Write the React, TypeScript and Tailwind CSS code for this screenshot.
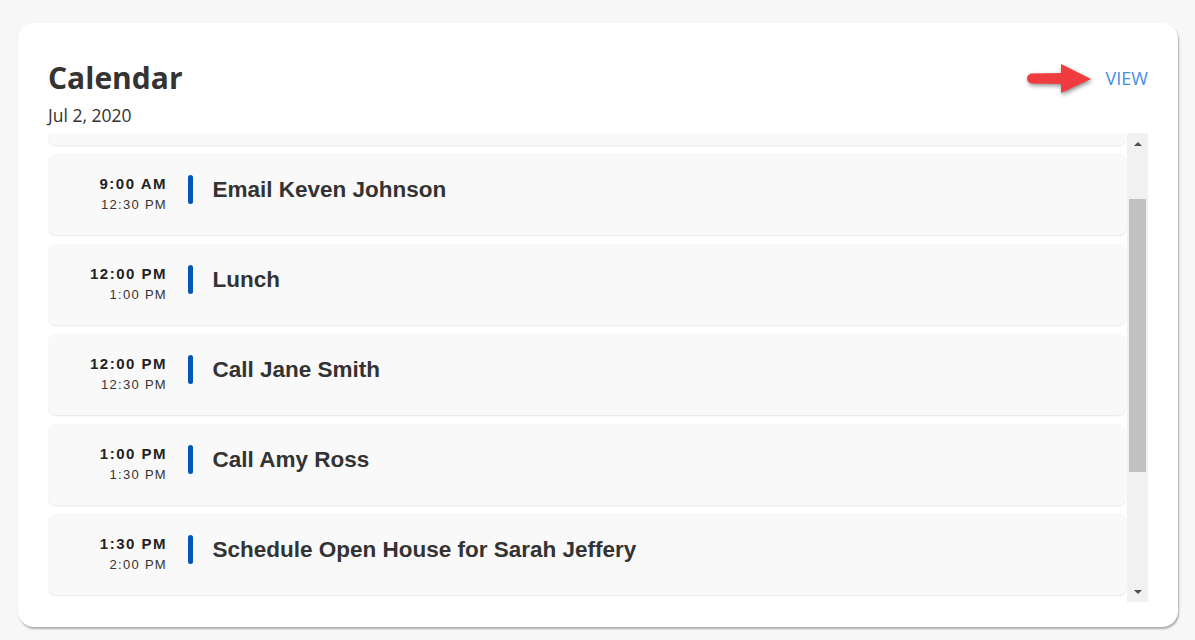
import React from 'react';

type Entry = { start: string; end: string; title: string };

const entries: Entry[] = [
  { start: '9:00 AM', end: '12:30 PM', title: 'Email Keven Johnson' },
  { start: '12:00 PM', end: '1:00 PM', title: 'Lunch' },
  { start: '12:00 PM', end: '12:30 PM', title: 'Call Jane Smith' },
  { start: '1:00 PM', end: '1:30 PM', title: 'Call Amy Ross' },
  { start: '1:30 PM', end: '2:00 PM', title: 'Schedule Open House for Sarah Jeffery' },
];

function RedArrow() {
  return (
    <svg width="70" height="36" viewBox="0 0 70 36" className="drop-shadow-[1px_2px_2px_rgba(0,0,0,0.45)]">
      <path d="M8 13.5 L39 13 L39 24 L8 23.5 A5 5 0 0 1 8 13.5 Z" fill="#f03c3e" />
      <path d="M37 4 L67 19 L37 33 Z" fill="#f03c3e" />
    </svg>
  );
}

function EventRow({ item }: { item: Entry }) {
  return (
    <div className="h-[81px] shrink-0 rounded-lg bg-[#f9f9f9] shadow-[0_1px_2px_rgba(0,0,0,0.1)] flex items-start pt-[21px] font-['Liberation_Sans',Arial,sans-serif]">
      <div className="w-[119px] text-right">
        <div className="text-[15px] leading-[17px] font-bold tracking-[0.1em] text-[#222]">{item.start}</div>
        <div className="text-[13px] leading-[25px] tracking-[0.1em] text-[#333]">{item.end}</div>
      </div>
      <div className="ml-[21px] w-[4.5px] h-[29px] rounded-full bg-[#0057b7]" />
      <div className="ml-[20px] text-[22.5px] leading-[29px] font-bold text-[#333]">{item.title}</div>
    </div>
  );
}

export default function App() {
  return (
    <div className="min-h-screen bg-[#f7f7f7] pl-[18px] pt-[23px]">
      <div className="w-[1160px] h-[604px] bg-white rounded-2xl shadow-[1px_2px_2px_rgba(0,0,0,0.3)] px-[30px] pt-[37px] pb-[25px] flex flex-col">
        <div className="flex justify-between items-start font-['Open_Sans',sans-serif]">
          <div>
            <h1 className="text-[30px] leading-[36px] font-bold text-[#333]">Calendar</h1>
            <div className="mt-[7px] text-[17.5px] leading-[24px] text-[#333]">Jul 2, 2020</div>
          </div>
          <div className="flex items-start">
            <RedArrow />
            <a className="ml-[12px] mt-[6px] text-[18px] leading-[24px] text-[#4a8ddc]">VIEW</a>
          </div>
        </div>

        <div className="mt-[6px] flex-1 flex min-h-0">
          <div className="flex-1 overflow-hidden">
            <div className="flex flex-col gap-[9px] pr-[1px]">
              {/* previous entry, scrolled mostly out of view */}
              <div className="h-[12px] shrink-0 rounded-b-lg bg-[#f9f9f9] shadow-[0_1px_2px_rgba(0,0,0,0.1)]" />
              {entries.map((e, i) => (
                <EventRow key={i} item={e} />
              ))}
            </div>
          </div>
          <div className="w-[21px] bg-[#f1f1f1] flex flex-col">
            <div className="h-[21px] flex items-center justify-center">
              <div className="w-0 h-0 border-l-[4px] border-r-[4px] border-b-[4px] border-l-transparent border-r-transparent border-b-[#505050]" />
            </div>
            <div className="flex-1 pt-[45px] px-[2px]">
              <div className="h-[273px] bg-[#c1c1c1]" />
            </div>
            <div className="h-[21px] flex items-center justify-center">
              <div className="w-0 h-0 border-l-[4px] border-r-[4px] border-t-[4px] border-l-transparent border-r-transparent border-t-[#505050]" />
            </div>
          </div>
        </div>
      </div>
    </div>
  );
}
